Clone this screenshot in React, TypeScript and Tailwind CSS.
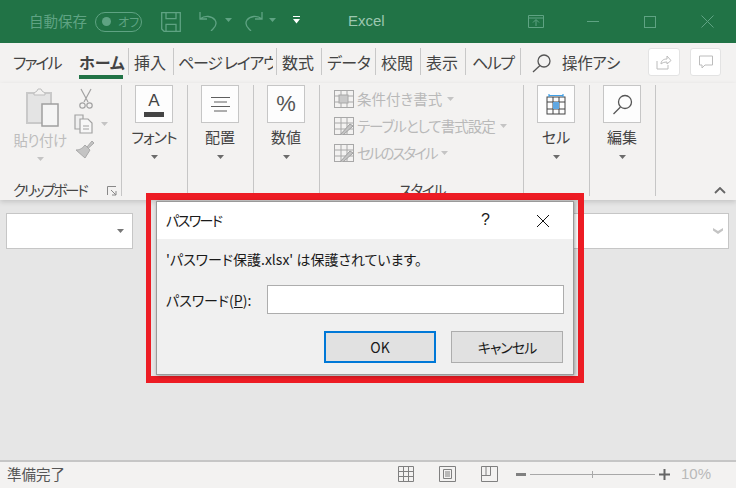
import React from "react";

const arial = "font-['Liberation_Sans',sans-serif]";

const Caret = ({ c = "#6b6b6b", className = "" }: { c?: string; className?: string }) => (
  <svg width="7" height="4" viewBox="0 0 7 4" className={className}><path d="M0 0h7L3.5 4z" fill={c} /></svg>
);

const tabs: { t: string; w: string; txt: string }[] = [
  { t: "ファイル", w: "w-[72px]", txt: "pl-[13px] tracking-[-2px]" },
  { t: "ホーム", w: "w-[57px]", txt: "pl-[7px] font-bold" },
  { t: "挿入", w: "w-[45px]", txt: "pl-[5px]" },
  { t: "ページ レイアウ", w: "w-[103px]", txt: "pl-[4px] mr-[3px] tracking-[-1.3px] overflow-hidden" },
  { t: "数式", w: "w-[45px]", txt: "pl-[5px]" },
  { t: "データ", w: "w-[54px]", txt: "pl-[5px] tracking-[-0.5px]" },
  { t: "校閲", w: "w-[45px]", txt: "pl-[5px]" },
  { t: "表示", w: "w-[45px]", txt: "pl-[5px]" },
  { t: "ヘルプ", w: "w-[55px]", txt: "pl-[6px] tracking-[-1.5px]" },
];

function Tabs() {
  return (
    <div className="flex h-[40px] bg-[#f3f2f1] text-[16px] leading-[20px] text-[#444444]">
      {tabs.map(({ t, w, txt }, i) => (
        <div key={t} className={`${w} flex h-full shrink-0 flex-col pt-[5px]`}>
          <div className={`h-[27px] pt-[4px] ${i > 0 ? "border-r border-[#c8c8c8]" : ""}`}>
            <div className={`whitespace-nowrap ${txt}`}>{t}</div>
          </div>
          {i === 1 && <span className="ml-[7px] h-[4px] w-[44px] bg-[#217346]" />}
        </div>
      ))}
      <svg width="20" height="20" viewBox="0 0 20 20" className="ml-[11px] mt-[10px] shrink-0" fill="none" stroke="#555" strokeWidth="1.3">
        <circle cx="12" cy="8" r="6" />
        <path d="M8 12.5L1 19" />
      </svg>
      <span className="ml-[10px] mt-[9px] w-[61px] whitespace-nowrap text-[15.5px] tracking-[-0.3px]">操作アシ</span>
      <div className="ml-[25px] mt-[5px] flex h-[28px] w-[32px] items-center justify-center rounded-[3px] border border-[#e3e3e3] bg-white">
        <svg width="16" height="16" viewBox="0 0 16 16" fill="none" stroke="#bcbcbc"><path d="M1 7v8h11v-4M5 10c0-3 2-5 6-5V2l4 4.5L11 10V8c-3 0-5 1-6 2z" /></svg>
      </div>
      <div className="ml-[10px] mt-[5px] flex h-[28px] w-[31px] items-center justify-center rounded-[3px] border border-[#e3e3e3] bg-white">
        <svg width="16" height="16" viewBox="0 0 16 16" fill="none" stroke="#bcbcbc"><path d="M1.5 2h13v9H7l-3 3v-3H1.5z" /></svg>
      </div>
    </div>
  );
}

const BigGroup = ({ icon, label, labelClass = "" }: { icon: React.ReactNode; label: string; labelClass?: string }) => (
  <div className="flex w-[66px] shrink-0 flex-col items-center border-r border-[#c6c6c6] pr-px">
    <div className="flex h-[38px] w-[38px] items-center justify-center border border-[#c6c6c6] bg-[#fdfdfd]">{icon}</div>
    <div className={`mt-[4px] whitespace-nowrap text-[15px] leading-[20px] text-[#444444] ${labelClass}`}>{label}</div>
    <Caret className="ml-[1px] mt-[8px]" />
  </div>
);

const StyleRow = ({ icon, label, track }: { icon: React.ReactNode; label: string; track: string }) => (
  <div className="flex h-[27px] items-center">
    {icon}
    <span className={`ml-[3px] whitespace-nowrap text-[14.5px] leading-[20px] text-[#b9b9b9] ${track}`}>{label}</span>
    <Caret c="#c4c4c4" className="ml-[5px]" />
  </div>
);

const GridIcon = ({ brush }: { brush?: boolean }) => (
  <svg width="20" height="18" viewBox="0 0 20 18" fill="none" stroke="#a8a8a8">
    <rect x="0.5" y="0.5" width="19" height="17" />
    <path d="M0 6h20M0 12h20M7 0v18M13 0v18" />
    {brush ? <path d="M6 18l10-11 3 2-10 9z" fill="#c4c4c4" stroke="#a0a0a0" /> : <rect x="5" y="5" width="9" height="8" fill="#c9c9c9" />}
  </svg>
);

function Ribbon() {
  return (
    <div className="relative z-10 flex h-[117px] bg-[#f3f2f1] pb-[4px] pt-[2px] shadow-[0_2px_5px_rgba(0,0,0,0.15)]">
      <div className="flex w-[122px] shrink-0 flex-col border-r border-[#c6c6c6]">
        <div className="flex">
          <div className="ml-[14px] flex w-[52px] flex-col items-center">
            <svg width="34" height="41" viewBox="0 0 34 41" fill="none" className="ml-[3px] mt-[3px]">
              <path d="M2 5h24v30H2z" fill="#e4e4e4" stroke="#c9c9c9" strokeWidth="2" />
              <path d="M9 5l3-2 1-2h3l1 2 3 2v2H9z" fill="#f3f2f1" stroke="#bdbdbd" />
              <rect x="17" y="16" width="16" height="22" fill="#f5f5f5" stroke="#9f9f9f" strokeWidth="1.5" />
            </svg>
            <span className="mt-[1px] whitespace-nowrap text-[14.5px] leading-[20px] tracking-[-0.5px] text-[#bdbdbd]">貼り付け</span>
            <Caret c="#c4c4c4" className="mt-[7px]" />
          </div>
          <div className="ml-[8px] flex flex-col">
            <svg width="14" height="22" viewBox="0 0 14 22" fill="none" stroke="#a2a2a2" strokeWidth="1.2" className="ml-[5px] mt-[3px]">
              <path d="M2 1l7 13M12 1L5 14" />
              <circle cx="3.5" cy="17.5" r="2.7" />
              <circle cx="10.5" cy="17.5" r="2.7" />
            </svg>
            <div className="mt-[4px] flex items-center">
              <svg width="20" height="20" viewBox="0 0 20 20" fill="none" stroke="#a2a2a2" strokeWidth="1.2">
                <path d="M1 1h8v14H1z" fill="#efefef" />
                <path d="M6 5h8l4 4v10H6z" fill="#f7f7f7" />
                <path d="M9 12h6M9 15h6" />
              </svg>
              <Caret c="#c4c4c4" className="ml-[7px]" />
            </div>
            <svg width="21" height="20" viewBox="0 0 21 20" className="mt-[5px]" fill="#c4c4c4" stroke="#a9a9a9">
              <path d="M13 8l5-6 2 2-6 5.5z" />
              <path d="M11 6l5 5-5 8-9-8c3 0 6-1 9-5z" />
            </svg>
          </div>
        </div>
        <div className="-mb-[4px] mt-auto flex h-[20px] items-center pl-[13px] text-[14.5px] leading-[20px] text-[#444444]">
          <span className="w-[94px] whitespace-nowrap tracking-[-2.3px]">クリップボード</span>
          <svg width="10" height="10" viewBox="0 0 10 10" fill="none" stroke="#888" className="mt-[2px]"><path d="M.5 9V.5H9M4 4l5 5M9 5v4H5" /></svg>
        </div>
      </div>

      <BigGroup
        label="フォント"
        labelClass="tracking-[-1px]"
        icon={
          <div className="flex w-[20px] flex-col items-center">
            <span className={`text-[17px] leading-[19px] text-[#444] ${arial}`}>A</span>
            <span className="mt-[2px] h-[5px] w-[20px] bg-[#444]" />
          </div>
        }
      />
      <BigGroup
        label="配置"
        icon={<svg width="19" height="16" viewBox="0 0 19 16" stroke="#5e5e5e"><path d="M0 1.5h19M3 6h13M0 10.5h19M3 15h13" /></svg>}
      />
      <BigGroup
        label="数値"
        icon={<span className={`text-[22px] leading-[24px] text-[#555] ${arial}`}>%</span>}
      />

      <div className="flex w-[204px] shrink-0 flex-col border-r border-[#c6c6c6] pl-[14px]">
        <div>
          <StyleRow track="" icon={<GridIcon />} label="条件付き書式" />
          <StyleRow track="tracking-[-1px]" icon={<GridIcon brush />} label="テーブルとして書式設定" />
          <StyleRow track="tracking-[-2px]" icon={<GridIcon brush />} label="セルのスタイル" />
        </div>
        <span className="-mb-[4px] ml-[65px] mt-auto text-[14.5px] leading-[20px] tracking-[-1.5px] text-[#444444]">スタイル</span>
      </div>

      <BigGroup
        label="セル"
        icon={
          <svg width="20" height="21" viewBox="0 0 20 21" fill="none">
            <rect x="1" y="3" width="18" height="17" stroke="#444" />
            <path d="M1 8h18M1 15h18M7 3v17M13 3v17" stroke="#444" />
            <rect x="7" y="8" width="6" height="7" fill="#5fa8e4" />
            <path d="M3 1.5h14M3 0v3M17 0v3" stroke="#3fa0e8" strokeWidth="1.2" />
          </svg>
        }
      />
      <BigGroup
        label="編集"
        icon={
          <svg width="21" height="21" viewBox="0 0 21 21" fill="none" stroke="#555" strokeWidth="1.3">
            <circle cx="13" cy="8" r="6.5" />
            <path d="M8.5 13L1.500 20" />
          </svg>
        }
      />
      <div className="flex flex-1 items-end justify-end pb-[2px] pr-[10px]">
        <svg width="12" height="7" viewBox="0 0 12 7" fill="none" stroke="#666" strokeWidth="1.8"><path d="M1 6l5-5 5 5" /></svg>
      </div>
    </div>
  );
}

function Body() {
  return (
    <div className="flex flex-1 justify-between bg-[#e6e6e6] pl-[6px] pr-[7px] pt-[13px]">
      <div className="flex h-[36px] w-[127px] items-center justify-end border border-[#c6c6c6] bg-white pr-[8px]">
        <Caret c="#777" />
      </div>
      <div className="flex h-[36px] w-[200px] items-center justify-end border border-[#c6c6c6] bg-white pr-[5px]">
        <svg width="10" height="6" viewBox="0 0 10 6"><path d="M0 0l5 3L10 0v2.500L5 6 0 2.500z" fill="#c4c4c4" /></svg>
      </div>
    </div>
  );
}

function StatusBar() {
  return (
    <div className="flex h-[28px] items-center border-t-2 border-[#c6c6c6] bg-[#f3f2f1] pb-[2px] text-[#555]">
      <span className="ml-[7px] w-[391px] text-[14.5px] leading-[20px] [font-feature-settings:normal]">準備完了</span>
      <svg width="16" height="16" viewBox="0 0 16 16" fill="none" stroke="#808080"><path d="M.5.5h15v15H.5zM0 5.500h16M0 10.500h16M5.500 0v16M10.500 0v16" /></svg>
      <svg width="17" height="16" viewBox="0 0 17 16" fill="none" stroke="#808080" className="ml-[25px]"><path d="M.5.5h16v15H.5zM4.500 3.500h8v9h-8zM6 6h5M6 8h5M6 10h5" /></svg>
      <svg width="17" height="16" viewBox="0 0 17 16" fill="none" stroke="#808080" className="ml-[25px]"><path d="M.5.5h16v15H.5zM.5 9.500h9M9.500.5v9M5 .5v9" /></svg>
      <span className="ml-[18px] h-[3px] w-[10px] bg-[#808080]" />
      <div className="relative ml-[4px] h-px w-[125px] bg-[#a8a8a8]">
        <span className="absolute left-[62px] top-[-3px] h-[7px] w-px bg-[#a8a8a8]" />
      </div>
      <svg width="11" height="11" viewBox="0 0 11 11" className="ml-[4px]" fill="#666"><path d="M4.500 0h2v4.500H11v2H6.500V11h-2V6.500H0v-2h4.500z" /></svg>
      <span className={`ml-[11px] text-[15px] leading-[20px] text-[#b9b9b9] ${arial}`}>10%</span>
    </div>
  );
}

function Dialog() {
  return (
    <div className="absolute left-[146px] top-[193px] z-20 h-[190px] w-[438px] border-b-[7px] border-l-[5px] border-r-[6px] border-t-[7px] border-[#ed1c24] pl-[5px] pt-px">
      <div className="h-[174px] w-[418px] border border-[#9a9a9a] bg-[#f0f0f0] text-[14px] leading-[20px] text-[#1a1a1a] shadow-[1px_1px_4px_rgba(0,0,0,0.35)]">
        <div className="flex h-[37px] items-center bg-white pb-[2px] pl-[9px]">
          <span className="w-[315px] tracking-[-1.5px]">パスワード</span>
          <span className={`text-[16px] ${arial}`}>?</span>
          <svg width="14" height="14" viewBox="0 0 14 14" className="ml-[46px] mt-[2px]" stroke="#111" fill="none"><path d="M1 1l12 12M13 1L1 13" /></svg>
        </div>
        <div className="pl-[9px] pt-[10px]">'パスワード保護.xlsx' は保護されています。</div>
        <div className="mt-[16px] flex items-center pl-[9px]">
          <span className="w-[101px]">パスワード(<span className="underline">P</span>):</span>
          <div className="h-[29px] w-[297px] border border-[#adadad] bg-white" />
        </div>
        <div className="mt-[17px] flex pl-[167px]">
          <div className="flex h-[32px] w-[112px] items-center justify-center border-2 border-[#0078d7] bg-[#e1e1e1]">OK</div>
          <div className="ml-[15px] flex h-[32px] w-[112px] items-center justify-center border border-[#adadad] bg-[#e1e1e1] tracking-[-1px]">キャンセル</div>
        </div>
      </div>
    </div>
  );
}

export default function App() {
  return (
    <div className="relative flex h-[488px] w-[736px] flex-col overflow-hidden bg-[#e6e6e6] font-['Noto_Sans_CJK_JP','Noto_Sans',sans-serif] [font-feature-settings:'palt']">
      <div className="flex h-[43px] shrink-0 items-center bg-[#217346] text-[#5fa383]">
        <span className="-mt-[2px] ml-[29px] text-[14.5px] leading-[20px]">自動保存</span>
        <div className="ml-[8px] flex h-[20px] w-[47px] items-center rounded-full border border-[#5fa383] pl-[6px]">
          <span className="h-[9px] w-[9px] rounded-full bg-[#5fa383]" />
          <span className="ml-[7px] text-[12px] leading-[16px]">オフ</span>
        </div>
        <svg width="20" height="20" viewBox="0 0 20 20" fill="none" stroke="#5fa383" strokeWidth="1.3" className="ml-[19px]">
          <path d="M.7.7h18.600v18.600H3L.7 17zM5 .7v6h10v-6M5 19.300v-7h10v7" />
        </svg>
        <svg width="19" height="20" viewBox="0 0 19 20" fill="none" stroke="#5fa383" strokeWidth="1.3" className="-mt-[1px] ml-[18px]">
          <path d="M1 1v7h7M1 8c5-4 12-3 15 1 2 3 1 6-2 9l-2 2" />
        </svg>
        <Caret c="#5fa383" className="-mt-[3px] ml-[7px]" />
        <svg width="19" height="20" viewBox="0 0 19 20" fill="none" stroke="#5fa383" strokeWidth="1.3" className="-mt-[1px] ml-[12px]">
          <path d="M18 1v7h-7M18 8c-5-4-12-3-15 1-2 3-1 6 2 9l2 2" />
        </svg>
        <Caret c="#5fa383" className="-mt-[3px] ml-[6px]" />
        <svg width="7" height="8" viewBox="0 0 7 8" className="-mt-[4px] ml-[17px]" fill="#fff"><path d="M0 0h7v1H0zM0 3h7L3.500 7.500 0 3z" /></svg>
        <span className={`-mt-[2px] ml-[48px] text-[15px] leading-[20px] text-[#9cc7b0] ${arial}`}>Excel</span>
        <svg width="16" height="13" viewBox="0 0 16 13" fill="none" stroke="#5fa383" className="ml-[143px]"><path d="M.5.5h15v12H.5zM.5 3h15M8 11V5M5 7.500L8 4.500l3 3" /></svg>
        <span className="ml-[43px] h-px w-[12px] bg-[#5fa383]" />
        <span className="ml-[45px] h-[12px] w-[12px] border border-[#5fa383]" />
        <svg width="13" height="13" viewBox="0 0 13 13" className="ml-[45px]" stroke="#5fa383" fill="none"><path d="M.5.5l12 12M12.500.5l-12 12" /></svg>
      </div>
      <Tabs />
      <Ribbon />
      <Body />
      <StatusBar />
      <Dialog />
    </div>
  );
}
